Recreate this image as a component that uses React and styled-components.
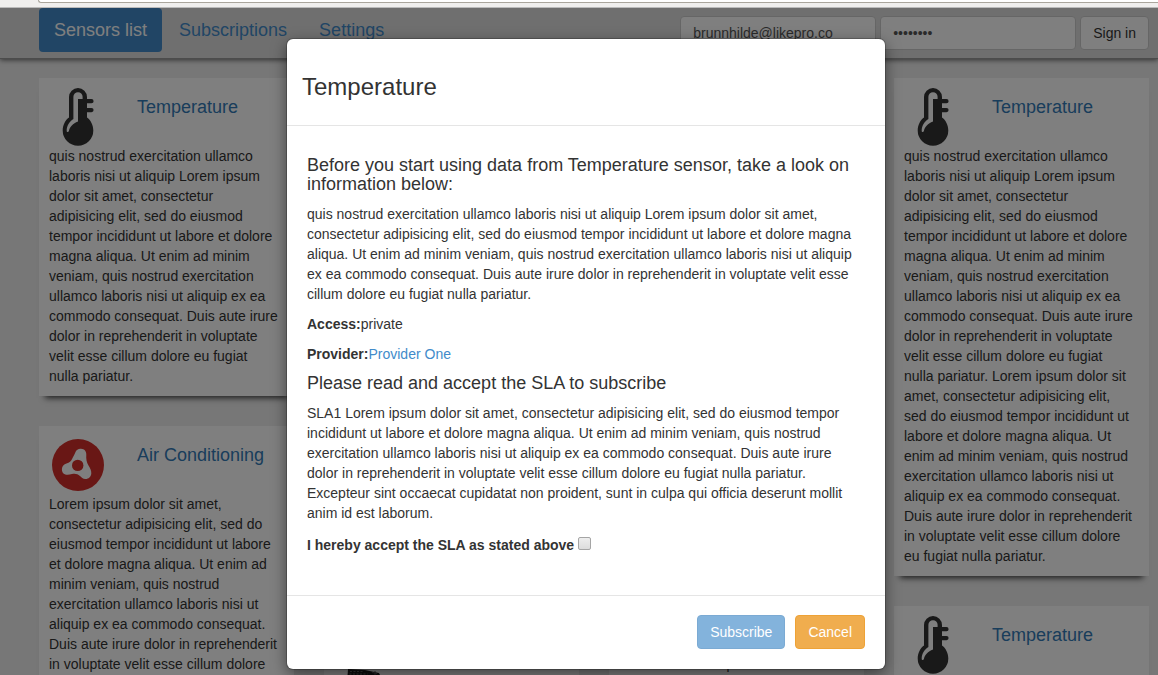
import React, { useState } from "react";
import styled, { createGlobalStyle } from "styled-components";

const Global = createGlobalStyle`
  * { box-sizing: border-box; }
  html, body { margin: 0; height: 100%; overflow: hidden; }
  body {
    background: #eee;
    color: #333;
    font: 14px/20px "Liberation Sans", Arial, sans-serif;
  }
  a { color: #428bca; text-decoration: none; }
  button, input { font: inherit; }
`;

const Chrome = styled.div`
  height: 8px;
  padding-left: 38px;
  background: #f0efee;
  border-bottom: 1px solid #bbb;
`;

const AddressBar = styled.div`
  height: 3px;
  background: #fff;
  border: 1px solid #aaa69d;
  border-top: 0;
  border-right: 0;
  border-radius: 0 0 0 3px;
`;

const Page = styled.div`
  position: relative;
  height: calc(100vh - 8px);
  overflow: hidden;
`;

const Header = styled.header`
  display: flex;
  align-items: flex-start;
  justify-content: space-between;
  height: 51px;
  padding: 0 9px 0 39px;
  background: #dfdfdf;
  border-bottom: 1px solid #999;
  box-shadow: 0 1px 5px rgba(0, 0, 0, 0.6);
`;

const Nav = styled.nav`
  display: flex;
  gap: 2px;
`;

const NavLink = styled.a`
  padding: 12px 15px;
  border-radius: 4px;
  font-size: 18px;
  line-height: 20px;
  background: ${(p) => (p.$active ? "#428bca" : "transparent")};
  && { color: ${(p) => (p.$active ? "#fff" : "#428bca")}; }
`;

const LoginForm = styled.form`
  display: flex;
  gap: 4px;
  padding-top: 8px;
`;

const Field = styled.input`
  width: 196px;
  height: 34px;
  padding: 6px 12px;
  color: #555;
  background: #fff;
  border: 1px solid #ccc;
  border-radius: 4px;
`;

const Button = styled.button`
  height: 34px;
  padding: 6px 12px;
  border: 1px solid ${(p) => p.$border || "#ccc"};
  border-radius: 4px;
  color: ${(p) => p.$color || "#333"};
  background: ${(p) => p.$bg || "#fff"};
  line-height: 20px;
  &:disabled { opacity: 0.65; }
`;

const Columns = styled.main`
  display: grid;
  grid-template-columns: repeat(4, minmax(0, 1fr));
  align-items: start;
  gap: 30px;
  padding: 19px 9px 0 39px;
`;

const Column = styled.div`
  display: grid;
  gap: 30px;
  padding-top: ${(p) => p.$start}px;
`;

const Card = styled.article`
  min-height: 90px;
  padding: 10px 14px 10px 10px;
  background: #fff;
  box-shadow: 0 8px 6px -6px rgba(0, 0, 0, 0.75);
`;

const CardHead = styled.div`
  display: flex;
  gap: 30px;
  height: 58px;
`;

const CardIcon = styled.svg`
  width: 58px;
  height: 58px;
`;

const CardTitle = styled.h4`
  margin: 9px 0;
  font-size: 18px;
  font-weight: 400;
  line-height: 20px;
  a { color: #337ab7; }
`;

const CardText = styled.p`
  margin: 0;
`;

const Backdrop = styled.div`
  position: absolute;
  inset: 0;
  display: flex;
  align-items: flex-start;
  justify-content: center;
  padding: 31px 0 0 14px;
  background: rgba(0, 0, 0, 0.5);
`;

const Dialog = styled.section`
  width: 598px;
  background: #fff;
  border-radius: 6px;
  box-shadow: 0 0 0 1px rgba(0, 0, 0, 0.2), 0 5px 15px rgba(0, 0, 0, 0.5);
`;

const DialogHead = styled.header`
  padding: 35px 15px 25px;
  border-bottom: 1px solid #e5e5e5;
`;

const DialogTitle = styled.h3`
  margin: 0;
  font-size: 24px;
  font-weight: 400;
  line-height: 26px;
`;

const DialogBody = styled.div`
  padding: 30px 20px 40px;
`;

const Subheading = styled.h4`
  margin: 0 0 10px;
  font-size: 18px;
  font-weight: 400;
  line-height: 19px;
`;

const Paragraph = styled.p`
  margin: 0 0 10px;
`;

const Accept = styled.label`
  display: flex;
  align-items: center;
  gap: 4px;
  padding-top: 2px;
  font-weight: 700;
`;

const Tick = styled.input`
  appearance: none;
  width: 13px;
  height: 13px;
  margin: 0 0 4px;
  border: 1px solid #a5a5a5;
  border-radius: 2px;
  background: linear-gradient(#eee, #dcdcdc);
  &:checked { background: #428bca; }
`;

const DialogFoot = styled.footer`
  display: flex;
  justify-content: flex-end;
  gap: 10px;
  padding: 19px 20px 20px;
  border-top: 1px solid #e5e5e5;
`;

const Thermometer = () => (
  <CardIcon viewBox="0 0 58 58" aria-hidden="true">
    <path d="M29 0a9 9 0 0 0-9 9v20.500C16.300 32 13.700 37 13.700 42.500a15.300 15.300 0 0 0 30.600 0C44.300 37 41.700 32 38 29.500V24.200h4.500a2.100 2.100 0 0 0 0-4.200H38v-4.700h4.500a2.100 2.100 0 0 0 0-4.200H38V9a9 9 0 0 0-9-9z" fill="#333" />
    <path d="M29 4.200a4.600 4.600 0 0 0-4.600 4.600V31c-4 2.500-6.700 6.500-6.700 12 0 1.300 1.900 1.300 2.200 0 .8-4 4-7.500 9.100-9.500V11h4.600V8.800A4.600 4.600 0 0 0 29 4.200z" fill="#fff" />
  </CardIcon>
);

const Fan = () => (
  <CardIcon viewBox="0 0 58 58" aria-hidden="true">
    <circle cx="29" cy="29" r="26" fill="#d32f2a" />
    <path d="M26.300 16.500C27.300 13.500 29.500 12.500 32 12.700c3.500.3 5.500 2.500 5.300 6C37 23 37.500 26 39.500 29.500c1.700 3 3 5 2.800 8-.3 3.500-3 5.700-6 5.500-2.500-.2-3.800-1.500-5.300-3-2.500-2.300-5-2.800-8-2-2.500.6-4.700 1-6.700.4-2.300-.8-3.600-3-3.400-5.500.2-3 2-4.800 4.600-5.500 3-.8 4.500-2.200 5.700-4.700 1.200-2.300 2.300-4 3.100-6.200z" fill="#fff" />
    <circle cx="28.700" cy="29.400" r="5.700" fill="#d32f2a" />
  </CardIcon>
);

const Remote = () => (
  <CardIcon viewBox="0 0 58 58" aria-hidden="true">
    <path d="M14 0l17 1 14 3 2 4-7 50H10z" fill="#1a1a1a" />
    <path d="M16 2.500h14M15.500 5h18" stroke="#666" strokeWidth="1" strokeDasharray="2 1.500" />
    <path d="M38 3.500l5 1M41 2v4" stroke="#555" strokeWidth="1" />
  </CardIcon>
);

const lorem =
  "Lorem ipsum dolor sit amet, consectetur adipisicing elit, sed do eiusmod tempor incididunt ut labore et dolore magna aliqua. Ut enim ad minim veniam, quis nostrud exercitation ullamco laboris nisi ut aliquip ex ea commodo consequat. Duis aute irure dolor in reprehenderit in voluptate velit esse cillum dolore eu fugiat nulla pariatur.";
const intro = "quis nostrud exercitation ullamco laboris nisi ut aliquip " + lorem;
const long = intro + " " + lorem;
const sla =
  "SLA1 " +
  lorem +
  " Excepteur sint occaecat cupidatat non proident, sunt in culpa qui officia deserunt mollit anim id est laborum.";

const columns = [
  {
    start: 0,
    cards: [
      { icon: Thermometer, title: "Temperature", text: intro },
      { icon: Fan, title: "Air Conditioning", text: lorem },
    ],
  },
  { start: 581, cards: [{ icon: Remote }] },
  { start: 566, cards: [{ text: "commodo consequat." }] },
  {
    start: 0,
    cards: [
      { icon: Thermometer, title: "Temperature", text: long },
      { icon: Thermometer, title: "Temperature" },
    ],
  },
];

function SensorCard({ icon: Icon, title, text }) {
  return (
    <Card>
      {Icon && (
        <CardHead>
          <Icon />
          {title && <CardTitle><a href="#sensor">{title}</a></CardTitle>}
        </CardHead>
      )}
      {text && <CardText>{text}</CardText>}
    </Card>
  );
}

export default function App() {
  const [accepted, setAccepted] = useState(false);
  return (
    <>
      <Global />
      <Chrome><AddressBar /></Chrome>
      <Page>
        <Header>
          <Nav>
            <NavLink href="#sensors" $active>Sensors list</NavLink>
            <NavLink href="#subscriptions">Subscriptions</NavLink>
            <NavLink href="#settings">Settings</NavLink>
          </Nav>
          <LoginForm>
            <Field type="text" aria-label="Email" defaultValue="brunnhilde@likepro.co" />
            <Field type="password" aria-label="Password" defaultValue="password" />
            <Button type="button">Sign in</Button>
          </LoginForm>
        </Header>
        <Columns>
          {columns.map(({ start, cards }, c) => (
            <Column key={c} $start={start}>
              {cards.map((card, i) => <SensorCard key={i} {...card} />)}
            </Column>
          ))}
        </Columns>
        <Backdrop>
          <Dialog role="dialog" aria-labelledby="dialog-title">
            <DialogHead><DialogTitle id="dialog-title">Temperature</DialogTitle></DialogHead>
            <DialogBody>
              <Subheading>Before you start using data from Temperature sensor, take a look on information below:</Subheading>
              <Paragraph>{intro}</Paragraph>
              <Paragraph><b>Access:</b>private</Paragraph>
              <Paragraph><b>Provider:</b><a href="#provider">Provider One</a></Paragraph>
              <Subheading>Please read and accept the SLA to subscribe</Subheading>
              <Paragraph>{sla}</Paragraph>
              <Accept>
                I hereby accept the SLA as stated above
                <Tick type="checkbox" checked={accepted} onChange={(e) => setAccepted(e.target.checked)} />
              </Accept>
            </DialogBody>
            <DialogFoot>
              <Button type="button" disabled={!accepted} $bg="#428bca" $border="#357ebd" $color="#fff">Subscribe</Button>
              <Button type="button" $bg="#f0ad4e" $border="#eea236" $color="#fff">Cancel</Button>
            </DialogFoot>
          </Dialog>
        </Backdrop>
      </Page>
    </>
  );
}
